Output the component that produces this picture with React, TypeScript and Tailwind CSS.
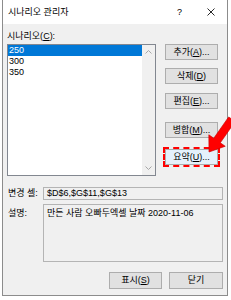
import type { ReactNode } from "react";

function Btn({ children, className = "" }: { children: ReactNode; className?: string }) {
  return (
    <div
      className={`flex h-[16px] w-[53px] items-center justify-center border border-[#adadad] bg-[#e1e1e1] ${className}`}
    >
      {children}
    </div>
  );
}

export default function App() {
  return (
    <div className="relative h-[300px] w-[231px] overflow-hidden bg-white font-['Liberation_Sans','Noto_Sans_CJK_KR',sans-serif] text-[9px] leading-none text-black">
      <div className="ml-[2px] flex h-[296px] w-[226px] flex-col border-x border-b border-[#8c8c8c]">
        {/* title bar */}
        <div className="flex h-[24px] shrink-0 items-center bg-white pl-[5px]">
          <span>시나리오 관리자</span>
          <span className="ml-auto">?</span>
          <svg className="ml-[25px] mr-[12px] h-[8px] w-[8px]" viewBox="0 0 8 8">
            <path d="M0.5 0.5 L7.5 7.5 M7.5 0.5 L0.5 7.5" stroke="#111" strokeWidth="0.9" fill="none" />
          </svg>
        </div>

        {/* body */}
        <div className="flex flex-1 flex-col bg-[#f0f0f0] px-[4px] pt-[6px]">
          <div className="h-[12px] leading-[12px]">
            시나리오(<u>C</u>):
          </div>

          <div className="mt-[2px] flex items-start">
            <div className="flex h-[132px] w-[149px] border border-[#828790] bg-white">
              <div className="flex-1">
                <div className="h-[11px] bg-[#0078d7] pl-[1px] leading-[11px] text-white">250</div>
                <div className="h-[11px] pl-[1px] leading-[11px]">300</div>
                <div className="h-[11px] pl-[1px] leading-[11px]">350</div>
              </div>
              <div className="flex w-[13px] flex-col items-center justify-between bg-[#f0f0f0] py-[5px]">
                <svg className="h-[4px] w-[7px]" viewBox="0 0 7 4">
                  <path d="M0.5 3.5 L3.5 0.5 L6.5 3.5" stroke="#a6a6a6" strokeWidth="1" fill="none" />
                </svg>
                <svg className="h-[4px] w-[7px]" viewBox="0 0 7 4">
                  <path d="M0.5 0.5 L3.5 3.5 L6.5 0.5" stroke="#a6a6a6" strokeWidth="1" fill="none" />
                </svg>
              </div>
            </div>

            <div className="ml-[9px] flex flex-col">
              <Btn>
                추가(<u>A</u>)...
              </Btn>
              <Btn className="mt-[8px]">
                삭제(<u>D</u>)
              </Btn>
              <Btn className="mt-[9px]">
                편집(<u>E</u>)...
              </Btn>
              <Btn className="mt-[13px]">
                병합(<u>M</u>)...
              </Btn>
              <Btn className="mt-[11px] border-[#0078d7] bg-[#e5f1fb] outline-2 outline-offset-[0px] outline-dashed outline-[#ff0000]">
                요약(<u>U</u>)...
              </Btn>
            </div>
          </div>

          <div className="mt-[11px] flex h-[13px] items-center">
            <div className="w-[36px] pl-[1px]">변경 셀:</div>
            <div className="flex h-full flex-1 items-center border border-[#b4b4b4] pl-[3px]">
              $D$6,$G$11,$G$13
            </div>
          </div>

          <div className="mt-[4px] flex h-[58px]">
            <div className="w-[36px] pl-[1px] pt-[4px] leading-[10px]">설명:</div>
            <div className="flex-1 border border-[#b4b4b4] pl-[3px] pt-[3px] leading-[10px]">
              만든 사람 오빠두엑셀 날짜 2020-11-06
            </div>
          </div>

          <div className="mt-[10px] flex justify-end gap-[7px]">
            <Btn className="h-[17px] border-[#0078d7]">
              표시(<u>S</u>)
            </Btn>
            <Btn className="h-[17px] w-[54px]">닫기</Btn>
          </div>
        </div>
      </div>

      {/* red pointer arrow */}
      <svg className="pointer-events-none absolute left-0 top-0 h-[300px] w-[231px]" viewBox="0 0 231 300">
        <polygon
          transform="translate(209 152) rotate(125)"
          points="-40,-4 -14,-4 -14,-10 0,0 -14,10 -14,4 -40,4"
          fill="#ff0000"
          stroke="#cc0000"
          strokeWidth="0.6"
        />
      </svg>
    </div>
  );
}
